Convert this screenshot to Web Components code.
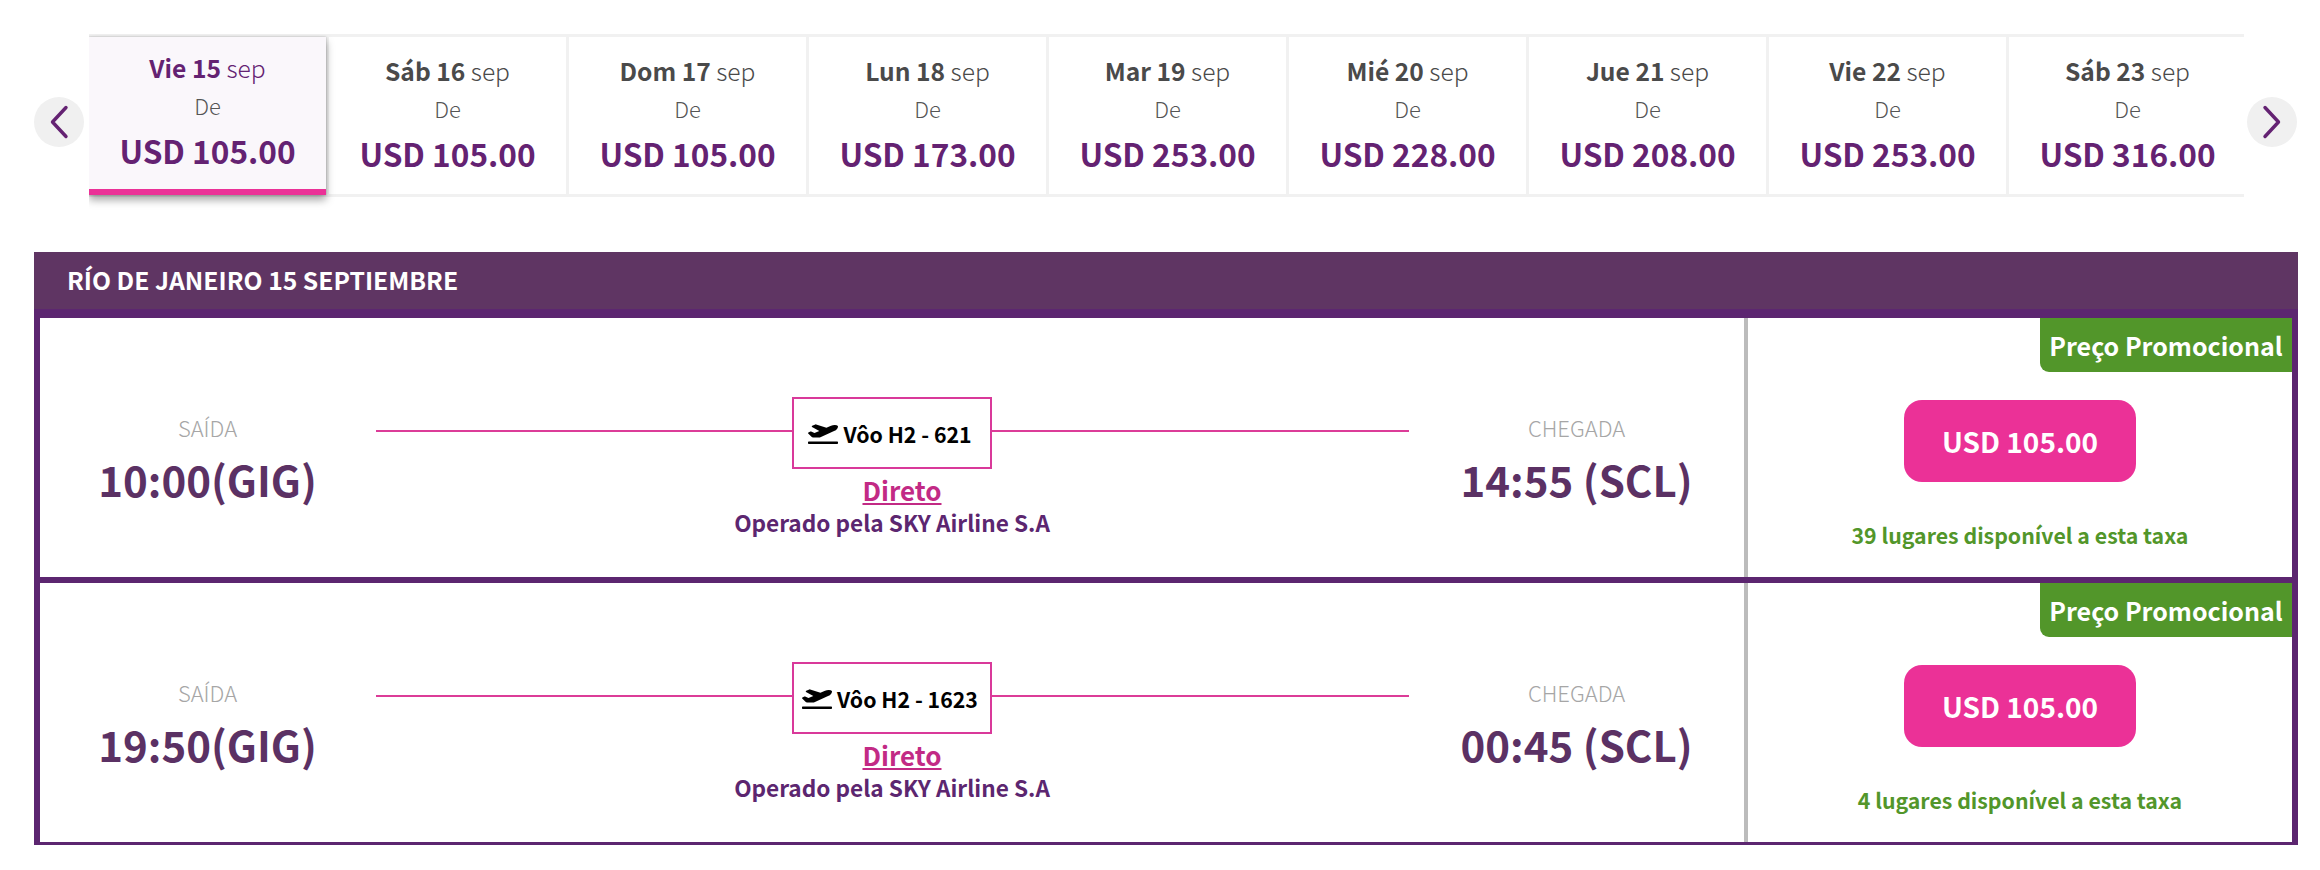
<!DOCTYPE html>
<html lang="es">
<head>
<meta charset="utf-8">
<title>Vuelos</title>
<style>
  html, body { margin: 0; background: #fff; }
  body { font-family: "Noto Sans CJK SC", "Source Sans Pro", "Noto Sans", sans-serif; }
</style>
</head>
<body>
<template id="date-card-tpl">
  <style>
    :host {
      display: block;
      flex: 0 0 237px;
      height: 157px;
      box-sizing: border-box;
      padding-top: 14px;
      text-align: center;
      color: #4a4a4a;
      background: #fff;
      position: relative;
    }
    :host([selected]) {
      color: #642272;
      background: #faf7fb;
      border-bottom: 6px solid #eb3197;
      padding-top: 11px;
      height: 158px;
      box-shadow: 0 5px 8px rgba(0,0,0,.35), 0 0 2px rgba(0,0,0,.25);
      z-index: 1;
    }
    .day { font-size: 24.6px; line-height: 38px; font-weight: 300; }
    ::slotted([slot=day]) { font-weight: 700; }
    ::slotted([slot=month]) { font-weight: 300; }
    .from { font-size: 22px; line-height: 38px; font-weight: 300; color: #555; }
    .price { font-size: 31.6px; line-height: 46px; font-weight: 700; color: #642272; margin-top: 3px; }
  </style>
  <div class="day"><slot name="day"></slot> <slot name="month"></slot></div>
  <div class="from">De</div>
  <div class="price"><slot name="price"></slot></div>
</template>

<template id="date-strip-tpl">
  <style>
    :host { display: flex; align-items: center; width: 2264px; margin-left: 34px; padding-top: 34px; }
    .arrow {
      flex: 0 0 50px; height: 50px; border-radius: 50%; background: #f0f0f0;
      display: flex; align-items: center; justify-content: center;
    }
    .view {
      flex: 0 0 2155px; margin: 0 3px 0 5px; overflow: hidden; height: 176px;
    }
    .track {
      height: 157px;
      border-top: 3px solid #f1f1f1; border-bottom: 3px solid #f1f1f1;
      display: flex; gap: 3px;
      background: #f1f1f1;
    }
  </style>
  <div class="arrow"><svg width="20" height="34" viewBox="0 0 20 34"><path d="M17 2.5 3.5 17 17 31.5" fill="none" stroke="#642272" stroke-width="3.4" stroke-linecap="round" stroke-linejoin="round"/></svg></div>
  <div class="view"><div class="track"><slot></slot></div></div>
  <div class="arrow"><svg width="20" height="34" viewBox="0 0 20 34"><path d="M3 2.5 16.5 17 3 31.5" fill="none" stroke="#642272" stroke-width="3.4" stroke-linecap="round" stroke-linejoin="round"/></svg></div>
</template>

<template id="flight-table-tpl">
  <style>
    :host { display: block; width: 2264px; margin: 42px 0 0 34px; }
    .title {
      height: 57px; box-sizing: border-box; background: #5f3563; color: #fff;
      font-size: 24.7px; font-weight: 700; line-height: 55px; padding-left: 33px;
    }
    .body { border: solid #5c2670; border-width: 9px 6px 3px; display: flex; flex-direction: column; gap: 6px; background: #5c2670; }
  </style>
  <div class="title"><slot name="title"></slot></div>
  <div class="body"><slot></slot></div>
</template>

<template id="flight-row-tpl">
  <style>
    :host {
      display: grid; grid-template-columns: 1704px 4px 1fr;
      height: 259px; background: #fff; position: relative;
    }
    .trip { display: grid; grid-template-columns: 335px 1fr 335px; }
    .end { text-align: center; padding-top: 92px; color: #5b3164; }
    .label { font-size: 22px; line-height: 34px; font-weight: 300; color: #a6a6a6; }
    .time { font-size: 42px; line-height: 60px; font-weight: 700; margin-top: 5px; }
    .mid { display: flex; flex-direction: column; align-items: center; padding-top: 79px; }
    .route { display: flex; align-self: stretch; align-items: flex-start; }
    .route i { flex: 1; height: 2px; margin-top: 33px; background: #dc3c98; }
    .route i:first-child { flex: none; width: 416px; margin-left: 1px; }
    .flight {
      width: 200px; height: 72px; box-sizing: border-box; border: 2px solid #d9399a; padding-right: 4px;
      display: flex; align-items: center; justify-content: center; gap: 5px;
      color: #000; font-size: 21.3px; font-weight: 700;
    }
    .flight svg { flex: none; }
    .stops { font-size: 26px; line-height: 30px; font-weight: 700; color: #c22a85; text-decoration: underline; margin: 6px 0 0 20px; }
    .operator { font-size: 22.6px; line-height: 30px; font-weight: 700; color: #5c2670; margin-top: 3px; }
    .rule { background: #bcbcbc; }
    .fare { display: flex; flex-direction: column; align-items: center; padding-top: 82px; position: relative; }
    .badge {
      position: absolute; top: 0; right: 0; width: 252px; height: 54px; box-sizing: border-box;
      background: #52962a; color: #fff; border-bottom-left-radius: 9px;
      font-size: 25px; font-weight: 700; line-height: 54px; text-align: center;
    }
    .buy {
      width: 232px; height: 82px; border-radius: 18px; background: #eb3197; color: #fff;
      font-size: 28px; font-weight: 700; line-height: 82px; text-align: center;
    }
    .seats { font-size: 21.3px; line-height: 30px; font-weight: 700; color: #52962a; margin-top: 38px; }
  </style>
  <div class="trip">
    <div class="end"><div class="label">SAÍDA</div><div class="time"><slot name="dep"></slot></div></div>
    <div class="mid">
      <div class="route">
        <i></i>
        <div class="flight">
          <svg width="30" height="21" viewBox="0 0 640 512" preserveAspectRatio="none"><path d="M624 448H16c-8.84 0-16 7.16-16 16v32c0 8.84 7.16 16 16 16h608c8.84 0 16-7.16 16-16v-32c0-8.84-7.16-16-16-16zM80.55 341.27c6.28 6.84 15.1 10.72 24.33 10.71l130.54-.18a65.62 65.62 0 0 0 29.64-7.12l290.96-147.65c26.74-13.57 50.71-32.94 67.02-58.31 18.31-28.48 20.3-49.09 13.07-63.65-7.21-14.57-24.74-25.27-58.25-27.45-29.85-1.94-59.54 5.92-86.28 19.48l-98.51 49.99-218.7-82.06a17.799 17.799 0 0 0-18-1.11L90.62 67.29c-10.67 5.41-13.25 19.65-5.17 28.53l156.22 98.1-103.21 52.38-72.35-36.47a17.804 17.804 0 0 0-16.03.09L9.91 230.22c-10.44 5.3-13.19 19.12-5.57 28.08l76.21 82.97z"/></svg>
          <span><slot name="flight"></slot></span>
        </div>
        <i></i>
      </div>
      <div class="stops">Direto</div>
      <div class="operator"><slot name="operator"></slot></div>
    </div>
    <div class="end"><div class="label">CHEGADA</div><div class="time"><slot name="arr"></slot></div></div>
  </div>
  <div class="rule"></div>
  <div class="fare">
    <div class="badge">Preço Promocional</div>
    <div class="buy"><slot name="fare"></slot></div>
    <div class="seats"><slot name="seats"></slot></div>
  </div>
</template>

<date-strip>
  <date-card selected><span slot="day">Vie 15</span><span slot="month">sep</span><span slot="price">USD 105.00</span></date-card>
  <date-card><span slot="day">Sáb 16</span><span slot="month">sep</span><span slot="price">USD 105.00</span></date-card>
  <date-card><span slot="day">Dom 17</span><span slot="month">sep</span><span slot="price">USD 105.00</span></date-card>
  <date-card><span slot="day">Lun 18</span><span slot="month">sep</span><span slot="price">USD 173.00</span></date-card>
  <date-card><span slot="day">Mar 19</span><span slot="month">sep</span><span slot="price">USD 253.00</span></date-card>
  <date-card><span slot="day">Mié 20</span><span slot="month">sep</span><span slot="price">USD 228.00</span></date-card>
  <date-card><span slot="day">Jue 21</span><span slot="month">sep</span><span slot="price">USD 208.00</span></date-card>
  <date-card><span slot="day">Vie 22</span><span slot="month">sep</span><span slot="price">USD 253.00</span></date-card>
  <date-card><span slot="day">Sáb 23</span><span slot="month">sep</span><span slot="price">USD 316.00</span></date-card>
</date-strip>

<flight-table>
  <span slot="title">RÍO DE JANEIRO 15 SEPTIEMBRE</span>
  <flight-row>
    <span slot="dep">10:00(GIG)</span><span slot="arr">14:55 (SCL)</span>
    <span slot="flight">Vôo H2 - 621</span><span slot="operator">Operado pela SKY Airline S.A</span>
    <span slot="fare">USD 105.00</span><span slot="seats">39 lugares disponível a esta taxa</span>
  </flight-row>
  <flight-row>
    <span slot="dep">19:50(GIG)</span><span slot="arr">00:45 (SCL)</span>
    <span slot="flight">Vôo H2 - 1623</span><span slot="operator">Operado pela SKY Airline S.A</span>
    <span slot="fare">USD 105.00</span><span slot="seats">4 lugares disponível a esta taxa</span>
  </flight-row>
</flight-table>

<script>
  class ShadowBase extends HTMLElement {
    constructor(tplId) {
      super();
      this.attachShadow({ mode: 'open' });
      this.shadowRoot.appendChild(document.getElementById(tplId).content.cloneNode(true));
    }
  }
  customElements.define('date-card', class extends ShadowBase { constructor() { super('date-card-tpl'); } });
  customElements.define('date-strip', class extends ShadowBase { constructor() { super('date-strip-tpl'); } });
  customElements.define('flight-table', class extends ShadowBase { constructor() { super('flight-table-tpl'); } });
  customElements.define('flight-row', class extends ShadowBase { constructor() { super('flight-row-tpl'); } });
</script>
</body>
</html>
